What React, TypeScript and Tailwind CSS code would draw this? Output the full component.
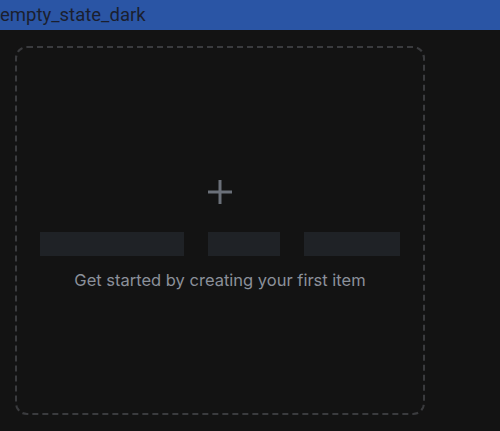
import React from 'react';

const App: React.FC = () => {
  return (
    <div className="w-[500px] h-[431px] bg-[#131313] overflow-hidden">
      {/* Title bar */}
      <div className="h-[30px] bg-[#2a55a5] flex items-center">
        <span className="text-[18.5px] leading-none text-[#1b1f2e]" style={{ fontFamily: 'Roboto, sans-serif' }}>
          empty_state_dark
        </span>
      </div>

      <div className="pl-[15px] pt-[16px]">
        <div className="w-[410px] h-[369px] pt-[10px] rounded-xl border-2 border-dashed border-[#3a3b3e] flex flex-col items-center justify-center">
          <svg width="24" height="24" viewBox="0 0 24 24" className="text-[#6b7079]">
            <path d="M12 0v24M0 12h24" stroke="currentColor" strokeWidth="3" />
          </svg>

          <div className="flex gap-6 mt-7">
            <div className="w-[144px] h-6 bg-[#1f2226]"></div>
            <div className="w-[72px] h-6 bg-[#1f2226]"></div>
            <div className="w-[96px] h-6 bg-[#1f2226]"></div>
          </div>

          <p className="mt-3 text-[16.5px] leading-6 text-[#8b909a]" style={{ fontFamily: 'Inter, sans-serif' }}>
            Get started by creating your first item
          </p>
        </div>
      </div>
    </div>
  );
};

export default App;
